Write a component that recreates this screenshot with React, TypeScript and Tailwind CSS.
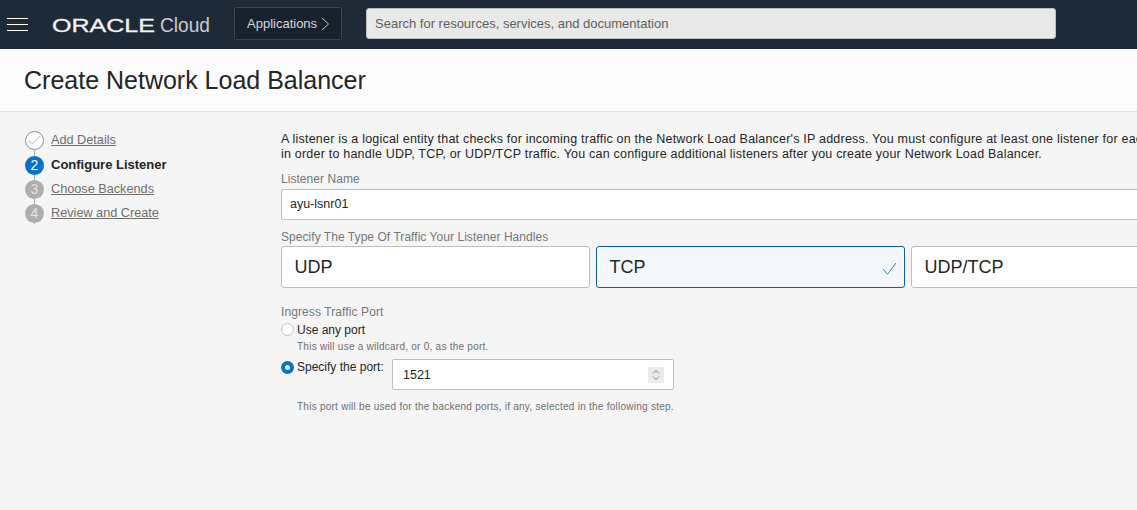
import { Check } from "lucide-react";

function Step({ n, label, state }: { n: number; label: string; state: "done" | "active" | "todo" }) {
  return (
    <div className="relative flex h-6 items-center gap-[7px] first:h-[25px]">
      {state === "done" ? (
        <span className="flex h-[19px] w-[19px] items-center justify-center rounded-full border border-[#8f8f8f] bg-white">
          <Check className="h-[17px] w-[17px] shrink-0 text-[#8f8f8f]" strokeWidth={1} />
        </span>
      ) : (
        <span
          className={
            state === "active"
              ? "flex h-[19px] w-[19px] items-center justify-center rounded-full bg-[#0572ce] text-[14px] text-white"
              : "flex h-[19px] w-[19px] items-center justify-center rounded-full bg-[#aeaeae] text-[14px] text-[#e4e4e4]"
          }
        >
          {n}
        </span>
      )}
      {state === "active" && <span className="text-[13px] font-bold text-[#252525]">{label}</span>}
      {state === "done" && <span className="text-[12.7px] text-[#6f6f6f] underline">{label}</span>}
      {state === "todo" && <span className="pt-[2px] text-[12.7px] text-[#6f6f6f] underline">{label}</span>}
    </div>
  );
}

function TrafficCard({ label, selected }: { label: string; selected?: boolean }) {
  return (
    <div
      className={
        selected
          ? "relative flex h-[42px] w-[309px] shrink-0 items-center rounded-[3px] border border-[#0d5f9e] bg-[#f4f8fc] px-[12.5px] text-[18px] text-[#252525]"
          : "relative flex h-[42px] w-[309px] shrink-0 items-center rounded-[3px] border border-[#bdbdbd] bg-white px-[12.5px] text-[18px] text-[#252525]"
      }
    >
      {label}
      {selected && (
        <svg className="absolute right-[7px] bottom-[12px] h-[13px] w-[15px]" viewBox="0 0 15 13" fill="none" stroke="#2f83b8" strokeWidth="1">
          <path d="M1 7l4.5 5.2L14 1" />
        </svg>
      )}
    </div>
  );
}

export default function App() {
  return (
    <div className="h-[510px] w-[1137px] overflow-hidden bg-[#f5f5f5] font-['Liberation_Sans',Arial,sans-serif]">
      <header className="flex h-[49px] items-center bg-[#1e2a38]">
        <div className="ml-[7px] flex w-[21px] flex-col gap-[5px]">
          <span className="h-px bg-white" />
          <span className="h-px bg-white" />
          <span className="h-px bg-white" />
        </div>
        <svg className="ml-[24px] h-[20px] w-[158px]" viewBox="0 0 158 20">
          <text x="0" y="16.5" textLength="103" lengthAdjust="spacingAndGlyphs" fontSize="18" fontWeight="400" stroke="#f2f2f2" strokeWidth="0.3" fill="#f2f2f2" fontFamily="Liberation Sans">
            ORACLE
          </text>
          <text x="108" y="16.5" textLength="50" lengthAdjust="spacingAndGlyphs" fontSize="20" fill="#c9ccd0" fontFamily="Liberation Sans">
            Cloud
          </text>
        </svg>
        <div className="mb-[2px] ml-[24px] flex h-[33px] w-[108px] items-center rounded-[2px] border border-[#3a4552] bg-[#18222d] pl-[12px] text-[13px] text-[#d5d8db]">
          Applications
          <svg className="ml-[4px] h-[14px] w-[9px]" viewBox="0 0 9 14" fill="none" stroke="#c9ccd0" strokeWidth="1">
            <path d="M1 1l6.5 6L1 13" />
          </svg>
        </div>
        <div className="mb-[2px] ml-[24px] flex h-[31px] w-[690px] items-center rounded-[3px] border border-[#bdbdbd] bg-[#e9e9e9] pl-[8px] text-[13px] text-[#5f5f5f]">
          Search for resources, services, and documentation
        </div>
      </header>

      <div className="flex h-[63px] items-center border-b border-[#e2e2e2] bg-[#fcfcfc] pt-[1px] pl-[24px] text-[25px] text-[#252525]">
        Create Network Load Balancer
      </div>

      <div className="flex">
        <aside className="relative w-[281px] shrink-0 pt-[16px] pl-[25px]">
          <span className="absolute top-[38px] left-[34px] h-[74px] w-px bg-[#aeaeae]" />
          <div className="relative">
            <Step n={1} label="Add Details" state="done" />
            <Step n={2} label="Configure Listener" state="active" />
            <Step n={3} label="Choose Backends" state="todo" />
            <Step n={4} label="Review and Create" state="todo" />
          </div>
        </aside>

        <main className="w-[939px] shrink-0 pt-[20px]">
          <p className="text-[12.5px] leading-[15px] tracking-[0.21px] whitespace-nowrap text-[#252525]">
            A listener is a logical entity that checks for incoming traffic on the Network Load Balancer's IP address. You must configure at least one listener for each
            <br />
            in order to handle UDP, TCP, or UDP/TCP traffic. You can configure additional listeners after you create your Network Load Balancer.
          </p>
          <label className="mt-[10px] block text-[12px] leading-[15px] tracking-[0.05px] text-[#777777]">Listener Name</label>
          <div className="mt-[2px] flex h-[31px] items-center rounded-[2px] border border-[#bdbdbd] bg-white pl-[8px] text-[12.5px] text-[#252525]">
            ayu-lsnr01
          </div>
          <label className="mt-[10px] block text-[12px] leading-[15px] tracking-[0.05px] text-[#777777]">Specify The Type Of Traffic Your Listener Handles</label>
          <div className="mt-[1px] flex gap-[6px]">
            <TrafficCard label="UDP" />
            <TrafficCard label="TCP" selected />
            <TrafficCard label="UDP/TCP" />
          </div>
          <label className="mt-[17px] block text-[12px] leading-[15px] tracking-[0.1px] text-[#777777]">Ingress Traffic Port</label>
          <div className="mt-[2px] flex h-[15px] items-center gap-[3px] text-[12px] text-[#252525]">
            <span className="h-[13px] w-[13px] rounded-full border border-[#bdbdbd] bg-white" />
            Use any port
          </div>
          <p className="mt-[4px] pl-[16px] text-[10px] leading-[12px] tracking-[0.25px] text-[#6f6f6f]">This will use a wildcard, or 0, as the port.</p>
          <div className="mt-[6px] flex items-start text-[12px] text-[#252525]">
            <span className="mt-[2px] flex h-[13px] w-[13px] items-center justify-center rounded-full bg-[#0572ce]">
              <span className="h-[5px] w-[5px] rounded-full bg-white" />
            </span>
            <span className="ml-[3px] w-[95px] pt-[1px] leading-[15px]">Specify the port:</span>
            <div className="flex h-[31px] w-[282px] items-center justify-between rounded-[2px] border border-[#bdbdbd] bg-white pt-[1px] pr-[9px] pl-[10px] text-[12.5px]">
              1521
              <svg className="h-[16px] w-[16px] bg-[#ebebeb]" viewBox="0 0 16 16" fill="none" stroke="#7a7a7a" strokeWidth="1">
                <path d="M5 6.5L8 3.5l3 3M5 9.5l3 3 3-3" />
              </svg>
            </div>
          </div>
          <p className="mt-[11px] pl-[16px] text-[10px] leading-[12px] tracking-[0.25px] text-[#6f6f6f]">
            This port will be used for the backend ports, if any, selected in the following step.
          </p>
        </main>
      </div>
    </div>
  );
}
